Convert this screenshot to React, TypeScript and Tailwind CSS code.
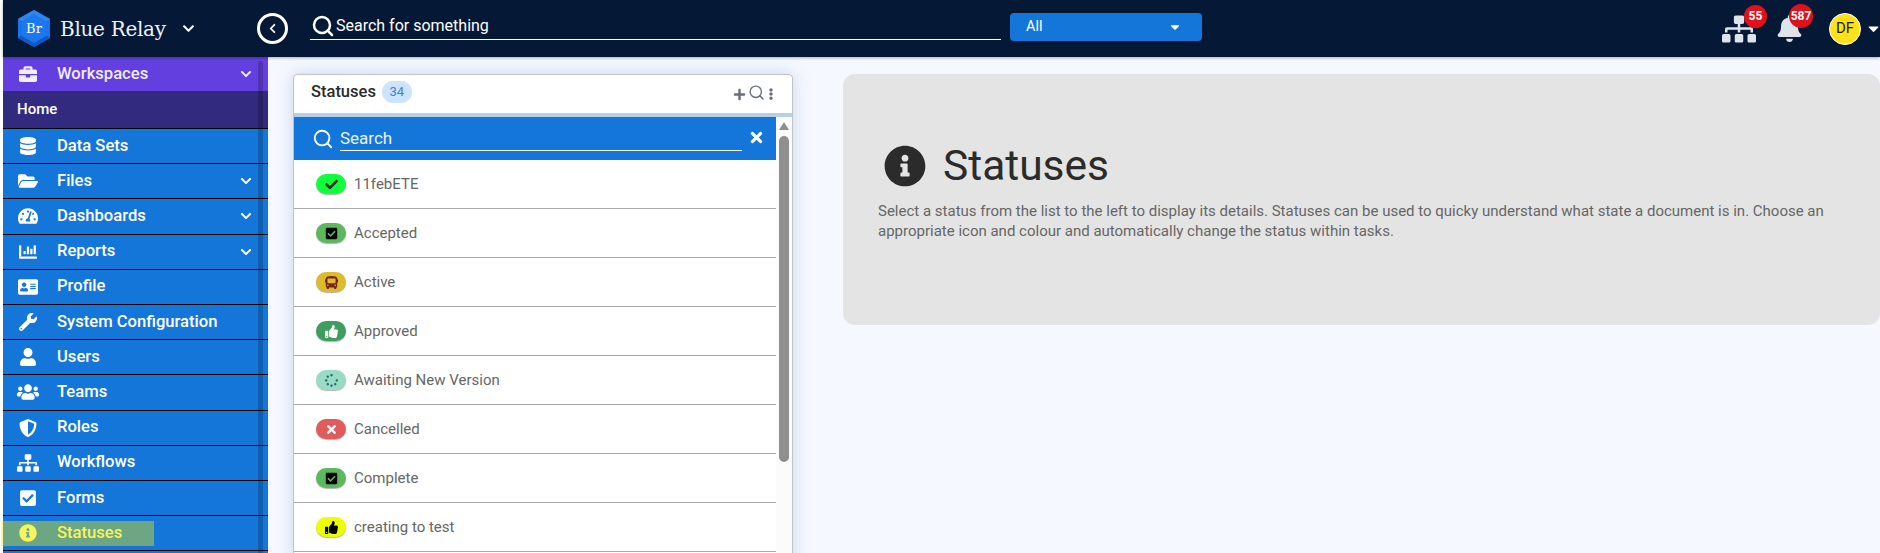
import React from 'react';
import {
  FaAddressCard, FaBell, FaBriefcase, FaBus, FaCaretDown, FaCheck, FaCheckSquare, FaChartBar,
  FaChevronDown, FaChevronLeft, FaDatabase, FaEllipsisV, FaFolderOpen, FaInfoCircle, FaPlus,
  FaShieldAlt, FaSitemap, FaSpinner, FaTachometerAlt, FaThumbsUp, FaTimes, FaUser, FaUsers, FaWrench,
} from 'react-icons/fa';
import { Search } from 'lucide-react';

const menu = [
  { label: 'Data Sets', icon: FaDatabase, size: 'text-[18px]' },
  { label: 'Files', icon: FaFolderOpen, size: 'text-[20px]', more: true },
  { label: 'Dashboards', icon: FaTachometerAlt, size: 'text-[20px]', more: true },
  { label: 'Reports', icon: FaChartBar, size: 'text-[18px]', more: true },
  { label: 'Profile', icon: FaAddressCard, size: 'text-[20px]' },
  { label: 'System Configuration', icon: FaWrench, size: 'text-[18px]' },
  { label: 'Users', icon: FaUser, size: 'text-[18px]' },
  { label: 'Teams', icon: FaUsers, size: 'text-[22px]' },
  { label: 'Roles', icon: FaShieldAlt, size: 'text-[18px]' },
  { label: 'Workflows', icon: FaSitemap, size: 'text-[22px]' },
  { label: 'Forms', icon: FaCheckSquare, size: 'text-[18px]' },
  { label: 'Statuses', icon: FaInfoCircle, size: 'text-[18px]', active: true },
];

const statuses = [
  { label: '11febETE', icon: FaCheck, pill: 'bg-[#10ff3c]', ink: 'text-[#1d2b25]' },
  { label: 'Accepted', icon: FaCheckSquare, pill: 'bg-[#5cb85c]', ink: 'text-black' },
  { label: 'Active', icon: FaBus, pill: 'bg-[#dcbc2c]', ink: 'text-[#7b2316]' },
  { label: 'Approved', icon: FaThumbsUp, pill: 'bg-[#3d9e5f]', ink: 'text-white' },
  { label: 'Awaiting New Version', icon: FaSpinner, pill: 'bg-[#98dcc6]', ink: 'text-[#1f6f68]' },
  { label: 'Cancelled', icon: FaTimes, pill: 'bg-[#e05c5c]', ink: 'text-white' },
  { label: 'Complete', icon: FaCheckSquare, pill: 'bg-[#5cb85c]', ink: 'text-black' },
  { label: 'creating to test', icon: FaThumbsUp, pill: 'bg-[#eeff00]', ink: 'text-black' },
];

function Logo() {
  return (
    <svg width="34" height="38" viewBox="0 0 34 38" className="shrink-0">
      <polygon points="17,0 33,9 33,28 17,37 1,28 1,9" fill="#1a73e8" />
      <polygon points="17,0 33,9 17,18 1,9" fill="#2f86f2" />
      <polygon points="1,28 17,18 33,28 17,37" fill="#1258c4" />
      <polygon points="5,11 17,4 29,11 29,26 17,33 5,26" fill="#1c78ee" />
      <text x="17" y="23" textAnchor="middle" fontSize="13" fill="#fff" fontFamily="'DejaVu Serif', serif">Br</text>
    </svg>
  );
}

function Header() {
  return (
    <header className="h-[57px] shrink-0 ml-[3px] bg-[#051937] flex items-center text-white relative z-20 shadow-[0_1px_3px_rgba(0,0,0,0.3)]">
      <div className="pl-[14px] w-[254px] flex items-center">
        <Logo />
        <span className="ml-[9px] text-[20px] tracking-[-0.3px] text-[#eef2f8] font-['DejaVu_Serif',serif]">Blue Relay</span>
        <FaChevronDown className="ml-[16px] text-[13px]" />
      </div>
      <button className="w-[31px] h-[31px] rounded-full border-[3px] border-white flex items-center justify-center">
        <FaChevronLeft className="text-[11px]" />
      </button>
      <div className="ml-[22px] w-[691px] h-[28px] border-b-[1.5px] border-white flex items-center gap-[1px] pl-[3px] self-start mt-[12px]">
        <Search size={24} strokeWidth={2.5} className="-ml-[2px]" />
        <span className="text-[16px]">Search for something</span>
      </div>
      <div className="ml-[9px] w-[192px] h-[28px] self-start mt-[13px] rounded-[4px] bg-[#1476d9] flex items-center justify-between pl-[16px] pr-[20px] text-[14.4px] shadow-sm">
        <span>All</span>
        <FaCaretDown className="text-[14px]" />
      </div>
      <div className="ml-auto flex items-center">
        <div className="relative text-[#dfe3ea] mr-[20px]">
          <FaSitemap className="text-[34px]" />
          <span className="absolute -top-[7px] -right-[11px] w-[23px] h-[23px] rounded-full bg-[#e0111b] text-white text-[12px] font-bold flex items-center justify-center">55</span>
        </div>
        <div className="relative text-[#dfe3ea] mr-[26px]">
          <FaBell className="text-[27px]" />
          <span className="absolute -top-[11px] -right-[10px] w-[24px] h-[24px] rounded-full bg-[#e0111b] text-white text-[12px] font-bold flex items-center justify-center">587</span>
        </div>
        <div className="w-[32px] h-[32px] rounded-full bg-[#ffe11a] border border-white text-[#1b1b1b] text-[15px] flex items-center justify-center">DF</div>
        <FaCaretDown className="ml-[4px] -mr-[2px] text-[17px] text-white" />
      </div>
    </header>
  );
}

function Sidebar() {
  return (
    <aside className="relative ml-[3px] w-[265px] shrink-0 h-full bg-[#1476d9] text-white text-[16.6px] font-medium">
      <div className="h-[34px] bg-[#643fdf] flex items-center pr-[16px] text-[#f1edff]">
        <span className="w-[50px] flex justify-center"><FaBriefcase className="text-[18px]" /></span>
        <span className="ml-[4px] flex-1">Workspaces</span>
        <FaChevronDown className="text-[12px]" />
      </div>
      <div className="h-[38px] bg-[#322a7e] border-b border-black flex items-center pl-[14px] text-[15px]">Home</div>
      {menu.map((m) => {
        const Icon = m.icon;
        return (
          <div key={m.label} className={`h-[35.2px] border-b border-black flex items-center pr-[16px] ${m.active ? 'text-[#fff59a]' : ''}`}>
            <span className="w-[50px] flex justify-center"><Icon className={m.size} /></span>
            <span className="ml-[4px] flex-1">{m.label}</span>
            {m.more && <FaChevronDown className="text-[12px]" />}
          </div>
        );
      })}
      <div className="absolute top-[4px] bottom-0 left-[255px] w-[5px] rounded-t-[3px] bg-black/20" />
      <div className="absolute left-[-2px] top-[464px] w-[153px] h-[24.5px] bg-[#f0f000]/40" />
    </aside>
  );
}

function StatusPanel() {
  return (
    <section className="w-[500px] shrink-0 h-[600px] bg-white border border-[#bfc3c9] rounded-t-[4px] shadow-[0_0_16px_rgba(120,150,200,0.35)] flex flex-col">
      <div className="h-[38px] shrink-0 flex items-center pl-[17px] pr-[15px]">
        <div className="flex items-center -mt-[4px]">
          <span className="text-[16.5px] font-medium text-[#2b2b2b]">Statuses</span>
          <span className="ml-[6px] w-[30px] h-[22px] rounded-full bg-[#cce4ff] text-[#3b82e6] text-[13px] flex items-center justify-center">34</span>
        </div>
        <div className="ml-auto flex items-center text-[#68707a]">
          <FaPlus className="text-[13px]" />
          <Search size={17} strokeWidth={2} className="ml-[2px] -mt-[3px]" />
          <FaEllipsisV className="text-[12px]" />
        </div>
      </div>
      <div className="h-[4px] shrink-0 bg-[#b9cfe6]" />
      <div className="flex flex-1 min-h-0">
        <div className="flex-1 min-w-0">
          <div className="h-[43px] bg-[#1476d9] flex items-center pl-[18px] pr-[11px] text-white">
            <Search size={22} strokeWidth={2} />
            <div className="ml-[6px] flex-1 h-[25px] border-b border-white text-[17px] leading-[24px] text-[#e8f2fc]">Search</div>
            <FaTimes className="ml-[6px] text-[17px] mb-[2px]" />
          </div>
          {statuses.map((s) => {
            const Icon = s.icon;
            return (
              <div key={s.label} className="h-[49px] border-b border-[#a9a9a9] flex items-center pl-[22px]">
                <span className={`w-[30px] h-[20px] rounded-[10px] flex items-center justify-center shadow-[0_1px_1px_rgba(0,0,0,0.3)] ${s.pill} ${s.ink}`}>
                  <Icon className="text-[13px]" />
                </span>
                <span className="ml-[8px] pt-[1px] text-[15px] text-[#666]">{s.label}</span>
              </div>
            );
          })}
        </div>
        <div className="w-[16px] shrink-0 bg-[#fbfbfb] relative">
          <div className="absolute left-[3px] top-[5px] w-0 h-0 border-x-[5px] border-x-transparent border-b-[8px] border-b-[#8f8f8f]" />
          <div className="absolute left-[3px] top-[19px] w-[10px] h-[326px] rounded-[5px] bg-[#8f8f8f]" />
        </div>
      </div>
    </section>
  );
}

function InfoCard() {
  return (
    <section className="ml-[50px] flex-1 h-[251px] bg-[#e4e4e4] rounded-[12px] pl-[35px] pr-[40px] pt-[71px]">
      <div className="flex items-center pl-[6px]">
        <FaInfoCircle className="text-[42px] text-[#2b2b2b]" />
        <h1 className="ml-[17px] text-[42.5px] leading-[42px] text-[#2b2b2b]">Statuses</h1>
      </div>
      <p className="mt-[14px] text-[15px] leading-[20px] text-[#666]">
        Select a status from the list to the left to display its details. Statuses can be used to quicky understand what state a document is in. Choose an appropriate icon and colour and automatically change the status within tasks.
      </p>
    </section>
  );
}

export default function App() {
  return (
    <div className="w-[1880px] h-[553px] overflow-hidden bg-white flex flex-col font-['Roboto',sans-serif]">
      <Header />
      <div className="flex flex-1 min-h-0">
        <Sidebar />
        <main className="flex-1 bg-[#f5f8fe] flex items-start pt-[17px] pl-[25px]">
          <StatusPanel />
          <InfoCard />
        </main>
      </div>
    </div>
  );
}
